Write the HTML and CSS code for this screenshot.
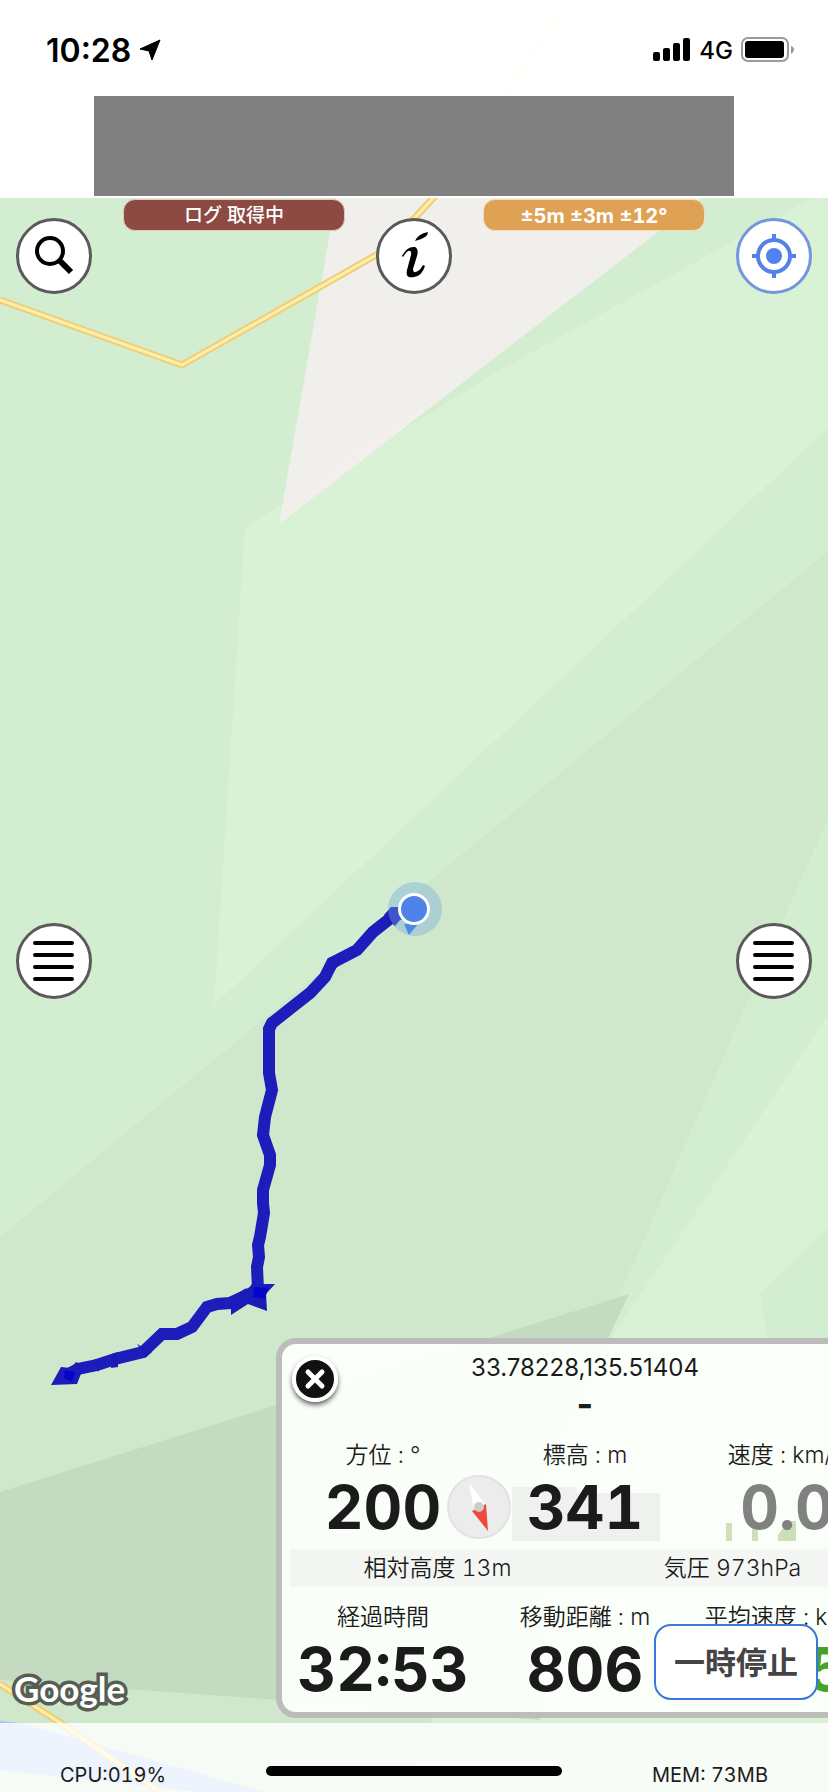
FILE: index.html
```html
<!DOCTYPE html>
<html lang="ja">
<head>
<meta charset="utf-8">
<meta name="viewport" content="width=device-width, initial-scale=1">
<title>GPS Log</title>
<link rel="stylesheet" href="styles.css">
</head>
<body>
<svg class="map-canvas" viewBox="0 0 828 1792" preserveAspectRatio="xMidYMid slice" aria-hidden="true">
  <rect width="828" height="1792" fill="#d3edd1"/>
  <path d="M828 189L500 370L245 527L214 1005L828 428Z" fill="#d9f1d5"/>
  <path d="M0 1237L828 551V1792H0Z" fill="#cfe8cb"/>
  <path d="M828 818L600 1340L400 1792H828Z" fill="#d3edd0"/>
  <path d="M828 1015L610 1340L400 1792H828Z" fill="#d9f1d5"/>
  <path d="M828 1228L760 1294L780 1420H828Z" fill="#d3edd0"/>
  <path d="M0 1492L629 1294L540 1480V1720L280 1700L125 1689L0 1680Z" fill="#c4dbc1"/>
  <path d="M372 0H880L702 198L279 524L336 198Z" fill="#f1efeb"/>
  <path d="M470 377L335 465L279 524Z" fill="#f4efec"/>
  <path d="M828 100L702 198L659 233L828 140Z" fill="#d3edd1"/>
  <path d="M0 1721L20 1723L265 1792H200L0 1770Z" fill="#a4c6f5"/>
  <g fill="none" stroke-linejoin="round">
    <path d="M0 300L182 365L385 250L436 195L570 0M0 1684L62 1724L160 1792" stroke="#f0ce78" stroke-width="7"/>
    <path d="M0 300L182 365L385 250L436 195L570 0M0 1684L62 1724L160 1792" stroke="#fdeeaa" stroke-width="3"/>
  </g>
  <path d="M404 912L392 917L373 932L357 950L332 963L325 977L310 993L272 1023L269 1029V1073L272 1090L265 1117L263 1135L270 1155V1165L263 1190V1203L264 1213L260 1237L258 1245L259 1257L257 1267L258 1290L230 1303L217 1304L207 1307L192 1327L177 1334H162L143 1352L115 1359L97 1365L78 1369L67 1375" fill="none" stroke="#1d1dbb" stroke-width="12"/>
  <path d="M51 1385L61 1367L71 1368L76 1362L84 1366L77 1384ZM275 1284L266 1294L267 1311L248 1304L231 1315V1298L246 1288L244 1294L252 1284ZM137 1344L152 1352L146 1357ZM112 1354L118 1352V1367L111 1368ZM94 1359L103 1362L98 1372ZM384 915L391 907H399L404 915L395 926L387 920ZM328 958L335 957L342 961L334 971Z" fill="#1b1bb9"/>
  <path d="M254 1287L268 1288L265 1299L253 1297ZM65 1370L75 1372L72 1382L64 1378Z" fill="#0505c8"/>
  <circle cx="415" cy="909" r="27" fill="#75a9db" fill-opacity=".4"/>
  <path d="M404 924H418L409 935Z" fill="#5086e4"/>
  <circle cx="414" cy="909" r="14.500" fill="#5083e7" stroke="#fff" stroke-width="3"/>
</svg>

<header class="header">
  <div class="status">
    <div class="status-side">
      <span class="clock">10:28</span>
      <svg width="22" height="22" viewBox="0 0 22 22"><path d="M21 1L1 10L10 12L13 21Z" stroke="#000" stroke-linejoin="round"/></svg>
    </div>
    <div class="status-side">
      <svg width="38" height="24" viewBox="0 0 38 24"><rect y="14" width="7" height="9" rx="2"/><rect x="10" y="10" width="7" height="13" rx="2"/><rect x="20" y="5" width="7" height="18" rx="2"/><rect x="30" width="7" height="23" rx="2"/></svg>
      <span class="network">4G</span>
      <svg width="54" height="26" viewBox="0 0 54 26"><rect x="1" y="1" width="46" height="23" rx="6" fill="none" stroke="#9b9b9b" stroke-width="2"/><rect x="4" y="4" width="39" height="17" rx="3"/><path d="M50 9Q53 10 53 12.500T50 17Z" fill="#999"/></svg>
    </div>
  </div>
  <div class="banner"></div>
</header>

<main class="map">
  <div class="toolbar">
    <button class="round" type="button" aria-label="検索"><svg viewBox="0 0 74 74"><circle cx="33" cy="32" r="13" fill="none" stroke="#000" stroke-width="4"/><path d="M42 41L54 53" stroke="#000" stroke-width="6"/></svg></button>
    <div class="badge badge-log">ログ 取得中</div>
    <button class="round" type="button" aria-label="情報"><svg viewBox="0 0 74 74"><path d="M38 22Q41 15 51 13Q51 19 38 22ZM25 37Q30 27 38 28Q42 30 40 37L36 50Q36 55 41 52Q44 50 46 46L48 47Q45 57 37 58Q28 60 30 51L34 36Q35 31 31 32Q29 33 26 38Z"/></svg></button>
    <div class="badge badge-gps">±5m ±3m ±12°</div>
    <button class="round round-blue" type="button" aria-label="現在地"><svg viewBox="0 0 74 74"><circle cx="37" cy="37" r="16" fill="none" stroke="#5580e8" stroke-width="4"/><circle cx="37" cy="37" r="8" fill="#5282f0"/><path d="M37 15V22M37 52V59M15 37H22M52 37H59" stroke="#5580e8" stroke-width="4"/></svg></button>
  </div>

  <div class="side-menus">
    <button class="round" type="button" aria-label="左メニュー"><svg viewBox="0 0 74 74"><path d="M18 19H55M18 31H55M18 43H55M18 55H55" stroke="#000" stroke-width="4" stroke-linecap="round"/></svg></button>
    <button class="round" type="button" aria-label="右メニュー"><svg viewBox="0 0 74 74"><path d="M18 19H55M18 31H55M18 43H55M18 55H55" stroke="#000" stroke-width="4" stroke-linecap="round"/></svg></button>
  </div>

  <div class="logo">Google</div>

  <section class="panel" aria-label="記録">
    <button class="close" type="button" aria-label="閉じる"><svg viewBox="0 0 46 46"><circle cx="23" cy="23" r="21" fill="#111" stroke="#fff" stroke-width="4"/><path d="M16 16L30 30M30 16L16 30" stroke="#fff" stroke-width="5" stroke-linecap="round"/></svg></button>
    <div class="coords">33.78228,135.51404</div>
    <div class="place">-</div>
    <div class="metrics metrics-live">
      <div class="metric"><div class="label">方位 : °</div><div class="value">200</div>
        <svg class="compass" viewBox="0 0 64 64"><circle cx="32" cy="32" r="31" fill="#ececec" stroke="#e2e2e2" stroke-width="2"/><path d="M22 8L39 30L27 36Z" fill="#fff"/><path d="M25 36L39 29L41 56Z" fill="#ec4a3b"/><circle cx="32" cy="32" r="5" fill="#ccc"/></svg>
      </div>
      <div class="metric"><div class="label">標高 : m</div><div class="value">341</div>
        <svg class="chart" viewBox="0 0 202 56" preserveAspectRatio="none"><path d="M28 2H93V8H176V56H28Z" fill="#eff1ee"/></svg>
      </div>
      <div class="metric"><div class="label">速度 : km/h</div><div class="value value-idle">0.0</div>
        <svg class="chart" viewBox="0 0 202 56" preserveAspectRatio="none"><path d="M40 38H46V56H40Z" fill="#d3debb"/><path d="M66 44H72V56H66ZM92 50L98 42L102 36H110V56H92Z" fill="#cbdfb8"/></svg>
      </div>
    </div>
    <div class="band"><div>相対高度 13m</div><div>気圧 973hPa</div></div>
    <div class="metrics metrics-total">
      <div class="metric"><div class="label">経過時間</div><div class="value">32:53</div></div>
      <div class="metric"><div class="label">移動距離 : m</div><div class="value">806</div></div>
      <div class="metric"><div class="label">平均速度 : km/h</div><div class="value value-speed">5</div></div>
    </div>
  </section>

  <button class="pause" type="button">一時停止</button>
</main>

<footer class="footer">
  <div>CPU:019%</div>
  <div class="home-bar"></div>
  <div class="memory">MEM: 73MB</div>
</footer>
</body>
</html>
```
FILE: styles.css
```css
* { box-sizing: border-box; }

body {
  margin: 0;
  min-height: 100vh;
  display: flex;
  flex-direction: column;
  position: relative;
  overflow-x: hidden;
  font-family: Inter, "Noto Sans CJK JP", sans-serif;
  font-variant-numeric: tabular-nums;
  color: #1b1b1b;
}

button {
  font: inherit;
  padding: 0;
  cursor: pointer;
}

.map-canvas {
  position: absolute;
  inset: 0;
  width: 100%;
  height: 100%;
  z-index: -1;
}

.header {
  background: rgba(255, 255, 255, 0.97);
  padding-bottom: 2px;
}

.status {
  height: 96px;
  padding: 4px 33px 0 46px;
  display: flex;
  align-items: center;
  justify-content: space-between;
  color: #000;
}

.status-side {
  display: flex;
  align-items: center;
  gap: 8px;
}

.clock {
  font-size: 32px;
  font-weight: 600;
  font-variant-numeric: normal;
}

.network {
  font-size: 24px;
  font-weight: 500;
  font-variant-numeric: normal;
}

.banner {
  height: 100px;
  margin: 0 94px;
  background: #808080;
}

.map {
  flex: 1;
  display: grid;
  grid-template: minmax(0, 1fr) / minmax(0, 1fr);
  overflow: hidden;
}

.map > * {
  grid-area: 1 / 1;
}

.toolbar {
  align-self: start;
  padding: 0 16px;
  display: grid;
  grid-template-columns: 76px 1fr 76px 1fr 76px;
  justify-items: center;
}

.toolbar .round {
  margin-top: 20px;
}

.round {
  width: 76px;
  height: 76px;
  border: 3px solid #5a5a5a;
  border-radius: 50%;
  background: #fff;
}

.round svg {
  display: block;
  width: 74px;
  height: 74px;
  margin: -2px;
}

.round-blue {
  border-color: #7496dd;
}

.badge {
  width: 222px;
  height: 32px;
  margin-top: 1px;
  border: 1px solid;
  border-radius: 12px;
  color: #fff;
  font-size: 19px;
  font-weight: 700;
  line-height: 32px;
  text-align: center;
}

.badge-log {
  background: #8c4a42;
  border-color: #e5c5bd;
  font-weight: 500;
}

.badge-gps {
  background: #dfa153;
  border-color: #f6dcb8;
  font-size: 20px;
}

.side-menus {
  align-self: center;
  padding: 0 16px;
  display: flex;
  justify-content: space-between;
}

.logo {
  place-self: end start;
  margin: 0 0 13px 14px;
  font-family: Lato, sans-serif;
  font-size: 35px;
  line-height: 44px;
  font-weight: 700;
  color: #fff;
  -webkit-text-stroke: 7px #565e54;
  paint-order: stroke fill;
}

.panel {
  position: relative;
  align-self: end;
  margin: 0 -66px 5px 276px;
  padding: 8px 8px 7px;
  border: 6px solid #bcbcba;
  border-radius: 20px;
  background: rgba(252, 255, 251, 0.97);
  text-align: center;
}

.close {
  position: absolute;
  left: 10px;
  top: 12px;
  width: 46px;
  height: 46px;
  border: 0;
  border-radius: 50%;
  background: none;
  box-shadow: 0 3px 5px rgba(0, 0, 0, 0.6);
}

.close svg {
  display: block;
}

.coords {
  font-size: 24px;
  font-variant-numeric: normal;
  line-height: 32px;
}

.place {
  font-size: 36px;
  font-weight: 700;
  line-height: 40px;
}

.metrics {
  display: grid;
  grid-template-columns: repeat(3, 1fr);
  margin: 0 -8px;
}

.metrics-live {
  padding: 15px 0 6px;
}

.metrics-total {
  padding-top: 14px;
}

.metric {
  position: relative;
  white-space: nowrap;
}

.label {
  font-size: 23px;
  font-weight: 350;
  line-height: 32px;
}

.value {
  position: relative;
  z-index: 1;
  font-size: 60px;
  font-weight: 700;
  line-height: 72px;
}

.value-idle { color: #818181; }

.value-speed {
  padding-left: 80px;
  color: #46a22b;
}

.chart {
  position: absolute;
  left: 0;
  bottom: 2px;
  width: 100%;
  height: 56px;
}

.compass {
  position: absolute;
  right: -27px;
  top: 36px;
  width: 64px;
  height: 64px;
}

.band {
  display: grid;
  grid-template-columns: 1fr 1fr;
  font-size: 23px;
  font-weight: 350;
  line-height: 38px;
  background: #f4f6f3;
}

.pause {
  place-self: end;
  position: relative;
  z-index: 2;
  width: 164px;
  height: 76px;
  margin: 0 10px 23px 0;
  padding-bottom: 4px;
  border: 2px solid #3b76dc;
  border-radius: 17px;
  background: #fff;
  color: #444;
  font-size: 31px;
  font-weight: 700;
}

.footer {
  height: 69px;
  padding: 0 60px;
  display: grid;
  grid-template-columns: 1fr 296px 1fr;
  align-items: end;
  background: rgba(255, 255, 255, 0.8);
  font-size: 20px;
  line-height: 34px;
}

.home-bar {
  height: 10px;
  margin-bottom: 16px;
  border-radius: 5px;
  background: #000;
}

.memory {
  text-align: right;
}
```
